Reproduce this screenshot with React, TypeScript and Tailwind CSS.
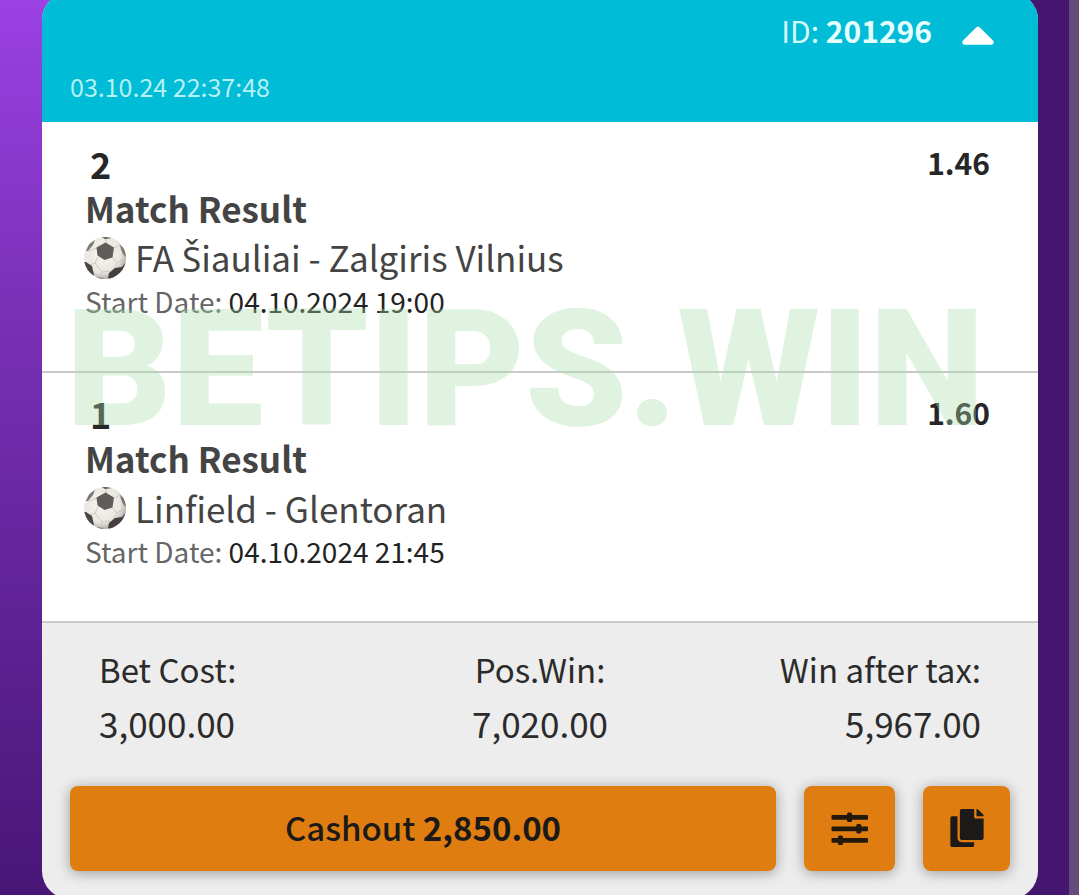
import React from "react";
import { FaCopy } from "react-icons/fa";

interface Bet {
  pick: string;
  odds: string;
  market: string;
  teams: React.ReactNode;
  date: string;
}

interface TotalProps {
  label: string;
  value: string;
  className?: string;
}

const bets: Bet[] = [
  {
    pick: "2",
    odds: "1.46",
    market: "Match Result",
    teams: (
      <>
        FA <span className="font-['Noto_Sans',sans-serif]">Š</span>iauliai - Zalgiris Vilnius
      </>
    ),
    date: "04.10.2024 19:00",
  },
  {
    pick: "1",
    odds: "1.60",
    market: "Match Result",
    teams: "Linfield - Glentoran",
    date: "04.10.2024 21:45",
  },
];

const BallIcon = () => (
  <svg viewBox="0 0 44 44" className="w-11 h-11 shrink-0" aria-hidden="true">
    <defs>
      <radialGradient id="ball" cx="42%" cy="40%" r="64%">
        <stop offset="0" stopColor="#f8f5f0" />
        <stop offset="0.7" stopColor="#e9e5df" />
        <stop offset="1" stopColor="#a8a19c" />
      </radialGradient>
      <clipPath id="ballClip">
        <circle cx="22" cy="22" r="21" />
      </clipPath>
    </defs>
    <circle cx="22" cy="22" r="21" fill="url(#ball)" />
    <g clipPath="url(#ballClip)">
      <path
        d="M23 3v5M14 12L6 15M31 12l6-3M29 21l5 6M15 21l-3 6M12 27l-5 2M12 27l7 9M34 27l-5 8M34 27l8-5M19 36l9-1M19 36l-3 6"
        fill="none"
        stroke="#cdc8c2"
        strokeWidth="1"
      />
      <path d="M13.500 11.500L22.500 6.500L31 11.500L29.500 21.500L21.500 24L14.500 19.500Z" fill="#5f5c5a" />
      <path d="M0 26l3 0 6 4 2 9-3 4-8-8z" fill="#4a4644" />
      <path d="M3 15l3-7 6-4-2 5-5 6z" fill="#7d7975" />
      <path d="M17 0h14l-2 2-7 1z" fill="#5b5755" />
      <path d="M37 9l4 3 3 10-4-4-2-5z" fill="#7b7571" />
      <path d="M26 37l6-5 7-1 5-6v14l-12 6-7-3z" fill="#45403f" />
      <path d="M14 41l7 1-2 2h-6z" fill="#8a8581" />
    </g>
  </svg>
);

const SlidersIcon = () => (
  <svg viewBox="0 0 38 34" className="w-[38px] h-[34px]" fill="#22180c" aria-hidden="true">
    <rect x="0.5" y="4" width="36.5" height="4.8" rx="1" />
    <rect x="16" y="1.5" width="5" height="9.6" rx="1.5" />
    <rect x="0.5" y="15.5" width="36.5" height="4.8" rx="1" />
    <rect x="25.3" y="13" width="5" height="9.6" rx="1.5" />
    <rect x="0.5" y="27" width="36.5" height="4.8" rx="1" />
    <rect x="7" y="24.4" width="5" height="9.6" rx="1.5" />
  </svg>
);

/**
 * One selection of the coupon
 */
const BetRow: React.FC<{ bet: Bet }> = ({ bet }) => (
  <li className="h-[250px] border-b-2 border-[#c9c9c9] pt-4 pl-[43px] pr-12">
    <div className="flex items-center justify-between h-[47px] pl-[5px] font-bold text-[#262626]">
      <span className="text-[36px]">{bet.pick}</span>
      <span className="text-[30px]">{bet.odds}</span>
    </div>
    <h3 className="h-11 leading-[44px] text-[35px] font-bold text-[#444]">{bet.market}</h3>
    <div className="flex items-center h-14 gap-2 -ml-0.5 text-[35px] text-[#444]">
      <BallIcon />
      <span className="leading-[56px]">{bet.teams}</span>
    </div>
    <p className="h-8 leading-[30px] text-[28px] text-[#666]">
      Start Date: <span className="text-[#222]">{bet.date}</span>
    </p>
  </li>
);

const Total: React.FC<TotalProps> = ({ label, value, className }) => (
  <div className={className}>
    <dt className="h-[54px] leading-[54px] text-[33px]">{label}</dt>
    <dd className="h-[54px] leading-[54px] text-[35px]">{value}</dd>
  </div>
);

const buttonStyle =
  "flex items-center justify-center h-[85px] pb-0.5 rounded-lg bg-[#e07d10] text-[#1c1a18] shadow-[0_2px_14px_rgba(0,0,0,0.35)]";

export default function App() {
  return (
    <div className="flex h-screen overflow-hidden bg-[#45166f] bg-[linear-gradient(to_bottom,#9a41e3,#7b30b8_34%,#581f8c_78%,#481677)] bg-[length:50%_100%] bg-no-repeat font-['Noto_Sans_CJK_SC','Noto_Sans',sans-serif]">
      <main className="flex-1 min-w-0 pl-[42px] pr-[31px]">
        <article className="-mt-2 rounded-[28px] overflow-hidden bg-[#ededed]">
          <header className="h-[130px] bg-[#00bcd6] pt-4 pl-7 pr-11">
            <div className="flex items-center justify-end h-11 gap-[30px] text-[30px] text-[#d5fafd]">
              <span>
                ID: <b className="text-[#e6ffff]">201296</b>
              </span>
              <button type="button" aria-label="Collapse" className="pt-3">
                <svg viewBox="0 0 32 20" className="w-8 h-5" aria-hidden="true">
                  <path
                    d="M14.4 1.2Q16 0 17.6 1.2L31 14.5Q32.5 16.5 31 18Q30.3 18.8 29 18.8H3Q1.7 18.8 1 18Q-0.5 16.5 1 14.5Z"
                    fill="#fff"
                  />
                </svg>
              </button>
            </div>
            <time className="block mt-3.5 h-10 leading-10 text-[25px] text-[#b5f0f7]">
              03.10.24 22:37:48
            </time>
          </header>

          <div className="relative bg-white pt-px">
            <ul>
              {bets.map((bet, i) => (
                <BetRow key={i} bet={bet} />
              ))}
            </ul>
            <div className="absolute left-6 top-[163px] leading-[168px] text-[164px] font-black font-[Roboto,sans-serif] text-[#a7dea9]/36 whitespace-nowrap pointer-events-none">
              BETIPS.WIN
            </div>
          </div>

          <footer className="pt-[19px] pb-7 px-7 text-[#2b2b2b]">
            <dl className="grid grid-cols-3 px-[29px]">
              <Total label="Bet Cost:" value="3,000.00" />
              <Total label="Pos.Win:" value="7,020.00" className="text-center" />
              <Total label="Win after tax:" value="5,967.00" className="text-right" />
            </dl>
            <div className="flex gap-7 mt-9">
              <button type="button" className={`${buttonStyle} flex-1 text-[33px] font-medium`}>
                <span>
                  Cashout <b>2,850.00</b>
                </span>
              </button>
              <button type="button" aria-label="Edit cashout" className={`${buttonStyle} w-[91px]`}>
                <SlidersIcon />
              </button>
              <button type="button" aria-label="Copy coupon" className={`${buttonStyle} w-[87px]`}>
                <FaCopy size={38} />
              </button>
            </div>
          </footer>
        </article>
      </main>
      <div className="w-[10px] bg-[#654b7a]" />
    </div>
  );
}
